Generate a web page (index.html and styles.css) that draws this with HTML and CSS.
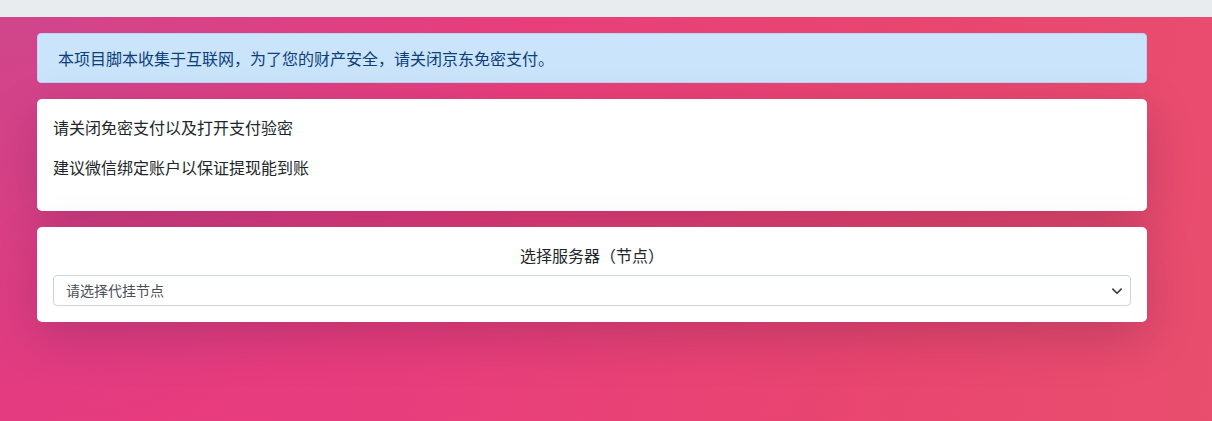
FILE: index.html
```html
<!DOCTYPE html>
<html lang="zh-CN">
<head>
<meta charset="utf-8">
<title>节点选择</title>
<link rel="stylesheet" href="styles.css">
</head>
<body>
<div class="topbar"></div>
<main class="page">
  <div class="container">
    <div class="alert">本项目脚本收集于互联网，为了您的财产安全，请关闭京东免密支付。</div>
    <section class="card">
      <div class="card-body">
        <p>请关闭免密支付以及打开支付验密</p>
        <p>建议微信绑定账户以保证提现能到账</p>
      </div>
    </section>
    <section class="card">
      <div class="card-body">
        <label class="title" for="node">选择服务器（节点）</label>
        <div class="select-wrap">
          <select id="node" class="select">
            <option>请选择代挂节点</option>
          </select>
          <svg class="chevron" viewBox="0 0 16 16" width="12" height="12" aria-hidden="true"><path d="M2.5 5.5 8 11l5.5-5.5" fill="none" stroke="#343a40" stroke-width="2.2" stroke-linecap="round" stroke-linejoin="round"/></svg>
        </div>
      </div>
    </section>
  </div>
</main>
</body>
</html>
```
FILE: styles.css
```css
html, body {
  margin: 0;
  padding: 0;
  height: 100%;
}
body {
  font-family: "Noto Sans CJK SC", "Noto Sans", "Liberation Sans", sans-serif;
  font-size: 16px;
  line-height: 24px;
  color: #212529;
  display: flex;
  flex-direction: column;
  background: #e8417a;
}
.topbar {
  height: 17px;
  background: #e9ecef;
  flex: none;
}
.page {
  flex: 1;
  background:
    radial-gradient(ellipse 520px 420px at 0px 0px, rgba(190, 80, 150, 0.55), rgba(190, 80, 150, 0) 100%),
    linear-gradient(100deg, #e5397f 0%, #e83d7d 35%, #e9466f 75%, #e94e6e 100%);
  padding-top: 16px;
}
.container {
  margin-left: 37px;
  width: 1110px;
  display: flex;
  flex-direction: column;
  gap: 16px;
}
.alert {
  background: #cae4fc;
  border: 1px solid #b6d6f9;
  border-radius: 4px;
  color: #0d3e78;
  padding: 12px 20px;
  height: 24px;
}
.card {
  background: #fff;
  border-radius: 5px;
  box-shadow: 0 16px 48px rgba(60, 20, 60, 0.22);
}
.card-body {
  padding: 16px;
  display: flex;
  flex-direction: column;
}
.card-body p {
  margin: 0 0 16px;
}
.title {
  text-align: center;
  margin-bottom: 8px;
  color: #212529;
}
.select-wrap {
  position: relative;
}
.select {
  appearance: none;
  -webkit-appearance: none;
  width: 100%;
  height: 31px;
  box-sizing: border-box;
  border: 1px solid #ced4da;
  border-radius: 4px;
  background: #fff;
  color: #495057;
  font-family: "Noto Sans CJK SC", "Noto Sans", sans-serif;
  font-size: 14px;
  padding: 0 30px 0 12px;
  line-height: 29px;
}
.chevron {
  position: absolute;
  right: 8px;
  top: 10px;
  pointer-events: none;
}
```
